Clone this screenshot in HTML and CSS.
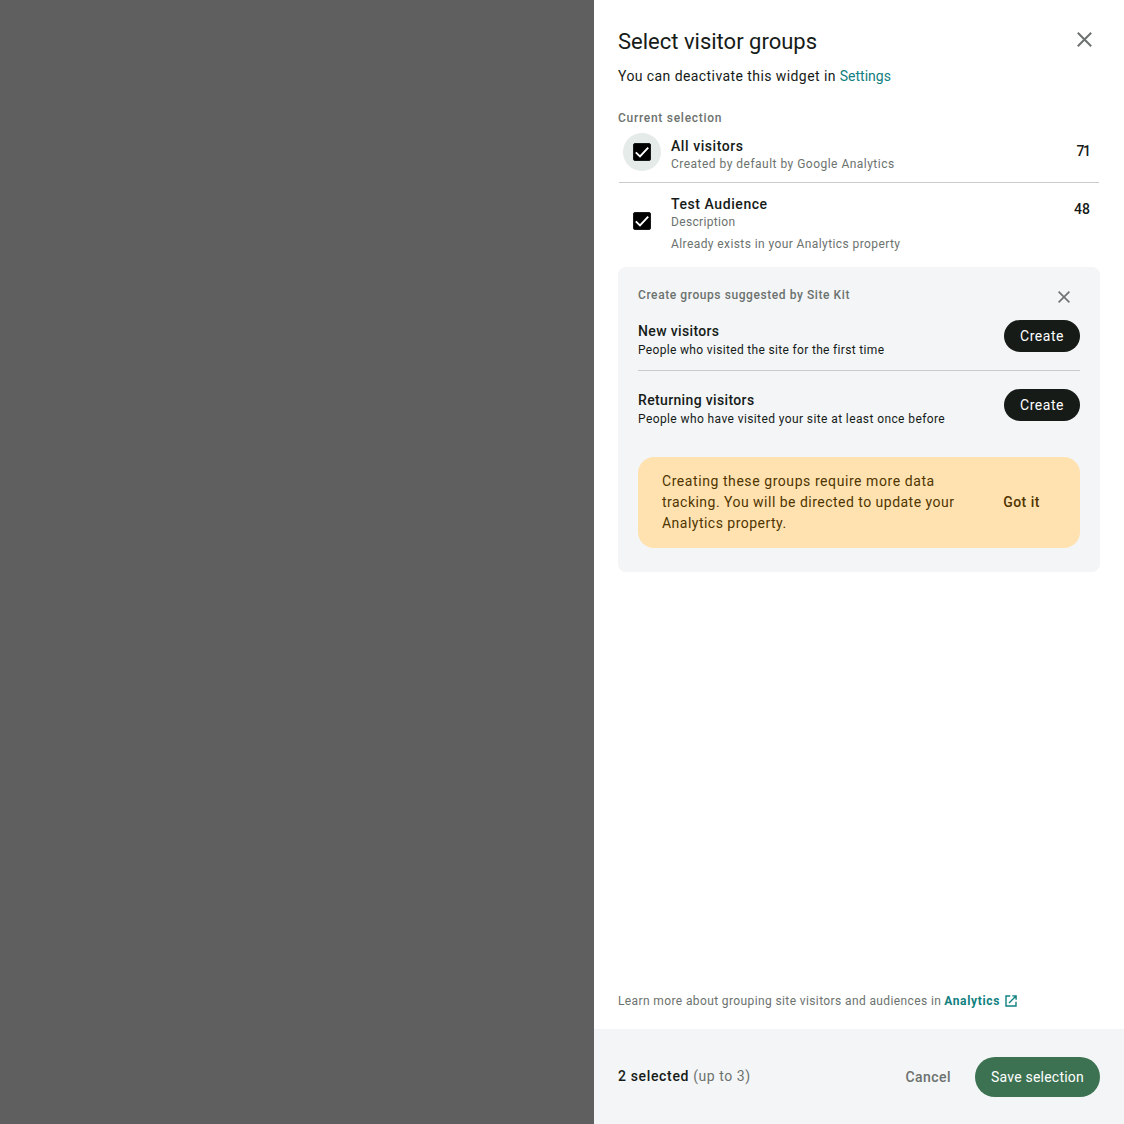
FILE: index.html
```html
<!DOCTYPE html>
<html lang="en">
<head>
<meta charset="utf-8">
<title>Select visitor groups</title>
<link rel="stylesheet" href="styles.css">
</head>
<body>
<div class="screen">
  <div class="scrim"></div>
  <aside class="panel">
    <div class="content">
      <header class="header">
        <h1 class="title">Select visitor groups</h1>
        <svg class="close" width="15" height="15" viewBox="0 0 15 15"><path d="M.8.8l13.4 13.4M14.2.8L.8 14.2"/></svg>
      </header>
      <p class="intro"><span class="intro-text">You can deactivate this widget in </span><a class="link">Settings</a></p>
      <h2 class="label">Current selection</h2>
      <ul class="groups">
        <li class="group">
          <span class="check halo"><svg width="18" height="18" viewBox="0 0 18 18"><rect x=".5" y=".5" width="17" height="17" rx="1.5"/><path d="M2.8 9.4l4.2 4.1L15.2 4.6"/></svg></span>
          <div class="group-text">
            <span class="name n-all">All visitors</span>
            <span class="note n-created">Created by default by Google Analytics</span>
          </div>
          <span class="count tight">71</span>
        </li>
        <li class="group second">
          <span class="check"><svg width="18" height="18" viewBox="0 0 18 18"><rect x=".5" y=".5" width="17" height="17" rx="1.5"/><path d="M2.8 9.4l4.2 4.1L15.2 4.6"/></svg></span>
          <div class="group-text">
            <span class="name n-test">Test Audience</span>
            <span class="note n-desc">Description</span>
            <span class="note exists">Already exists in your Analytics property</span>
          </div>
          <span class="count">48</span>
        </li>
      </ul>
      <section class="suggested">
        <div class="suggested-head">
          <h2 class="label s-label">Create groups suggested by Site Kit</h2>
          <svg class="close small" width="12" height="12" viewBox="0 0 12 12"><path d="M.6.6l10.8 10.8M11.4.6L.6 11.4"/></svg>
        </div>
        <div class="suggestion">
          <div class="suggestion-text">
            <span class="name n-new">New visitors</span>
            <span class="about a-new">People who visited the site for the first time</span>
          </div>
          <button class="create">Create</button>
        </div>
        <div class="suggestion returning">
          <div class="suggestion-text">
            <span class="name n-new">Returning visitors</span>
            <span class="about a-ret">People who have visited your site at least once before</span>
          </div>
          <button class="create">Create</button>
        </div>
        <div class="notice">
          <p class="notice-text"><span class="l1">Creating these groups require more data</span><br>tracking. You will be directed to update your<br>Analytics property.</p>
          <button class="got-it">Got it</button>
        </div>
      </section>
      <p class="learn"><span class="learn-text">Learn more about grouping site visitors and audiences in</span> <a class="link strong">Analytics</a><svg class="external" width="12" height="12" viewBox="0 0 12 12"><path d="M5.2 1H1v10h10V6.8M7.3.9h3.8v3.8M11 1L4 8"/></svg></p>
    </div>
    <footer class="footer">
      <p class="selected"><strong>2 selected </strong><span class="limit">(up to 3)</span></p>
      <button class="cancel">Cancel</button>
      <button class="save">Save selection</button>
    </footer>
  </aside>
</div>
</body>
</html>
```

FILE: styles.css
```css
* { box-sizing: border-box; }
body, h1, h2, p, ul { margin: 0; padding: 0; }
body { font-family: Roboto, "Liberation Sans", sans-serif; color: #161b18; background: #fff; overflow: hidden; }
button { border: 0; background: none; font: inherit; padding: 0; white-space: nowrap; }
.screen { display: flex; height: 1124px; }
.scrim { flex: 1; background: #5f5f5f; }
.panel { width: 530px; display: flex; flex-direction: column; background: #fff; white-space: nowrap; }
.content { flex: 1; display: flex; flex-direction: column; padding: 24px 24px 18px; }
.header { display: flex; justify-content: space-between; height: 36px; padding-right: 8px; }
.title { font-size: 22px; font-weight: 400; line-height: 36px; }
.close { display: block; margin-top: 8px; fill: none; stroke: #6c726e; stroke-width: 2; }
.intro { font-size: 14px; line-height: 20px; margin-top: 6px; height: 20px; }
.intro-text { letter-spacing: .42px; }
.link { color: #108080; }
.label { font-size: 12px; font-weight: 500; line-height: 16px; color: #6c726e; letter-spacing: .73px; }
.content > .label { margin-top: 24px; }
.suggested .s-label { letter-spacing: .58px; }
.groups { list-style: none; padding: 0 1px; }
.group { display: flex; height: 57px; padding: 11px 9px 0 0; border-bottom: 1px solid #c8cccb; }
.group.second { height: 84px; padding-top: 12px; border: 0; }
.check { display: grid; place-items: center; width: 38px; height: 38px; border-radius: 50%; margin: -4px 10px 0 4px; }
.second .check { margin-top: 7px; }
.halo { background: #e5ebe8; }
.check svg { display: block; }
.check rect { fill: #000; stroke: #161b18; }
.check path { fill: none; stroke: #fff; stroke-width: 1.9; }
.group-text, .suggestion-text { flex: 1; display: flex; flex-direction: column; align-items: flex-start; }
.group-text { margin-top: -1px; }
.name { font-size: 14px; font-weight: 500; line-height: 20px; letter-spacing: .57px; }
.n-new { letter-spacing: .35px; }
.note { font-size: 12px; line-height: 16px; color: #6c726e; }
.n-created { letter-spacing: .48px; }
.n-desc { letter-spacing: .33px; }
.exists { margin-top: 6px; letter-spacing: .41px; }
.count { font-size: 14px; font-weight: 500; line-height: 20px; margin-top: 4px; }
.tight { letter-spacing: -1.5px; padding-right: 1.5px; margin-right: -1px; }
.suggested { height: 305px; padding: 20px; border-radius: 8px; background: #f3f5f7; }
.suggested-head { display: flex; justify-content: space-between; height: 33px; padding-right: 10px; }
.small { margin-top: 4px; stroke-width: 1.6; }
.suggestion { display: flex; height: 51px; border-bottom: 1px solid #c8cccf; }
.suggestion-text { padding-top: 1px; }
.suggestion.returning { height: 69px; padding-top: 18px; border: 0; }
.about { font-size: 12px; line-height: 19px; }
.a-new { letter-spacing: .33px; }
.a-ret { letter-spacing: .4px; }
.create { width: 76px; height: 32px; border-radius: 16px; background: #161b18; color: #fff; font-size: 14px; letter-spacing: .5px; }
.notice { display: flex; align-items: center; justify-content: space-between; height: 91px; margin-top: 17px; padding: 0 40px 0 24px; border-radius: 16px; background: #ffe2b0; color: #4f3500; font-size: 14px; line-height: 21px; }
.notice-text { letter-spacing: .48px; }
.l1 { letter-spacing: .57px; }
.got-it { color: #4f3500; font-weight: 500; letter-spacing: .5px; }
.learn { display: flex; align-items: center; gap: 3px; margin-top: auto; height: 20px; font-size: 12px; color: #6c726e; }
.learn-text { letter-spacing: .385px; }
.strong { font-weight: 700; letter-spacing: .65px; }
.external { margin-left: 2px; fill: none; stroke: #108080; stroke-width: 1.4; }
.footer { display: flex; align-items: center; height: 95px; padding: 0 24px; background: #f3f5f7; font-size: 14px; }
.selected { margin: 0 auto 2px 0; }
.selected strong { font-weight: 500; letter-spacing: .65px; }
.limit { color: #6c726e; letter-spacing: .55px; }
.cancel { color: #6c726e; font-weight: 500; margin-right: 24px; letter-spacing: .45px; }
.save { width: 125px; height: 40px; border-radius: 20px; background: #3c7251; color: #fff; letter-spacing: .22px; }
```
